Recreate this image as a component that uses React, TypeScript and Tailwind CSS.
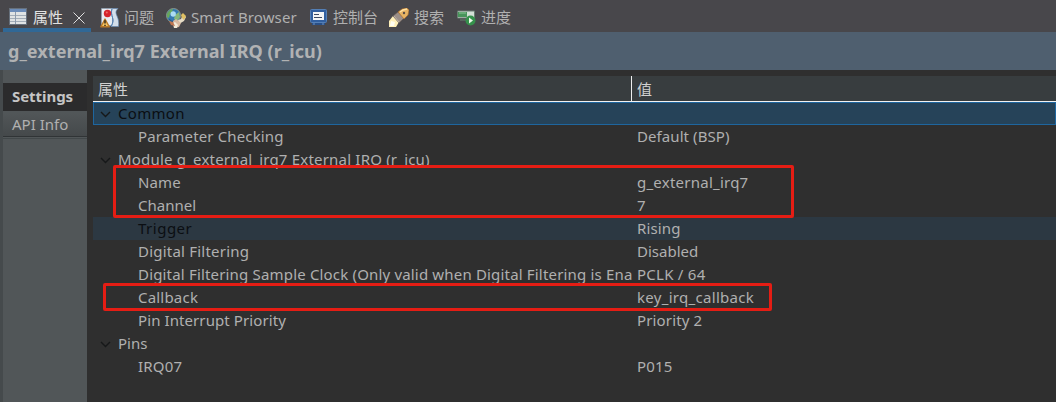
import type { ReactNode } from "react";

function TableIcon() {
  return (
    <svg className="h-[17px] w-[18px]" viewBox="0 0 18 17">
      <rect x="0" y="0" width="18" height="17" fill="#66707c" />
      <rect x="1" y="1" width="16" height="3" fill="#6c8cb8" />
      <rect x="1" y="4" width="16" height="12" fill="#e0e3e4" />
      <path d="M1 7.500h16M1 10.500h16M1 13.500h16" stroke="#a3adb8" strokeWidth="1" />
      <rect x="6" y="4" width="1" height="12" fill="#8d9bad" />
    </svg>
  );
}

function ProblemsIcon() {
  return (
    <svg className="h-5 w-[19px]" viewBox="0 0 19 20">
      <path d="M1.500.5h11v17h-11z" fill="#e9edf2" stroke="#91a4bb" strokeWidth=".6" />
      <path d="M12 .5h6c-2.500 2.500-2.500 4-1 7.500s2 6 1.500 10.500H11c2-4 2.500-6 1.500-9s-1.500-6-.5-9z" fill="#d3deea" stroke="#6688b0" strokeWidth=".7" />
      <path d="M12 1c-1 3-.5 5.500.5 8.500s.5 5-1 8.500" stroke="#4f7db2" strokeWidth="1" fill="none" />
      <circle cx="7.500" cy="5.500" r="3.700" fill="#d5252d" />
      <circle cx="6.800" cy="4.600" r="1" fill="#ef6b65" />
      <path d="M5 11 9.300 18.800H.8z" fill="#f6c765" stroke="#b97a28" strokeWidth="1.400" strokeLinejoin="round" />
      <path d="M5 12.300v3.200M5 16.700v1.300" stroke="#342716" strokeWidth="1.500" />
    </svg>
  );
}

function BrowserIcon() {
  return (
    <svg className="h-5 w-5" viewBox="0 0 20 20">
      <circle cx="7.500" cy="7.500" r="7" fill="#3578b0" stroke="#9aa58f" strokeWidth=".8" />
      <path d="M1 6c1-3 4-5 6-5l-1 3-2 2-1 4-2-1z" fill="#68a75b" />
      <path d="m9 7 4-3 1 5-3 4-3-2z" fill="#86b77b" />
      <circle cx="7.200" cy="6" r="2.700" fill="#acdcf2" />
      <path d="M3 11c2 3 5 3 7 2" stroke="#25598b" strokeWidth="1.200" fill="none" />
      <path d="m12 12 3-1 2-5 3 3-2 4-5 3z" fill="#e6dcc6" />
      <path d="m15 7 2-2 3 3-2 4-2-2z" fill="#dfc063" />
      <path d="m7 13 3-2 5 4-2 4-5 1z" fill="#d9b9a1" />
      <path d="m7 15 2-1 3 3-1 3H8z" fill="#f3ead8" />
      <path d="m3 13 4 1 2 4-4-1z" fill="#bd7550" />
    </svg>
  );
}

function ConsoleIcon() {
  return (
    <svg className="h-[17px] w-[17px]" viewBox="0 0 17 17">
      <rect x=".5" y=".5" width="16" height="13" rx="1" fill="#315f9f" stroke="#547fb5" />
      <rect x="3" y="3" width="11" height="8" fill="#f3f5f6" />
      <path d="M4 5.500h5M4 8.500h8" stroke="#3d4a62" />
      <path d="M2 14h13v2H2z" fill="#294f86" />
      <path d="M3 15h2M12 15h2" stroke="#6e91bd" />
    </svg>
  );
}

function SearchIcon() {
  return (
    <svg className="h-[19px] w-5" viewBox="0 0 20 19">
      <path d="M0 19v-6l4-5 6 6-3 5z" fill="#fff0b9" />
      <path d="m1 18 1-5 4 1-1 4z" fill="#fffdf1" />
      <path d="m4 8 5-4 6 6-5 5z" fill="#9b8f88" stroke="#665d58" strokeWidth=".6" />
      <path d="m5 8 5 6" stroke="#c0b4a9" strokeWidth="1" />
      <path d="m9 4 4-3 5-1 2 2-1 5-4 4z" fill="#e6b364" stroke="#a96c2c" strokeWidth=".7" />
      <path d="m11 4 3-2 4-1" stroke="#ffe2a2" strokeWidth="1.500" fill="none" />
      <circle cx="15" cy="5" r="1.200" fill="#554c48" />
    </svg>
  );
}

function ProgressIcon() {
  return (
    <svg className="h-4 w-[19px]" viewBox="0 0 19 16">
      <path d="M.5 1h17v7H.5z" fill="#d3e0d6" stroke="#687b70" />
      <path d="M1 2h9v5H1z" fill="#48945b" />
      <path d="M2 3h7" stroke="#8bc596" />
      <path d="M3 10h6" stroke="#668171" />
      <circle cx="13.500" cy="10.500" r="5" fill="#35914b" />
      <path d="m12 7.500 4 3-4 3z" fill="#edf7ec" />
    </svg>
  );
}

function Tab({ icon, label, className }: { icon: ReactNode; label: string; className: string }) {
  return (
    <div className={`flex h-full shrink-0 items-center whitespace-nowrap ${className}`}>
      <span className="flex w-[20px] shrink-0 justify-center pt-[3px]">{icon}</span>
      <span className="ml-[5px] pt-[2px]">{label}</span>
    </div>
  );
}

type RowData = { name: string; value?: string; group?: boolean; state?: "selected" | "hover"; tracking?: string; valueTracking?: string };

const rows: RowData[] = [
  { name: "Common", group: true, state: "selected", tracking: "tracking-[0.3px]" },
  { name: "Parameter Checking", value: "Default (BSP)", tracking: "tracking-[0.14px]", valueTracking: "tracking-[0.08px]" },
  { name: "Module g_external_irq7 External IRQ (r_icu)", group: true, tracking: "tracking-[0.2px]" },
  { name: "Name", value: "g_external_irq7", tracking: "tracking-[0.1px]", valueTracking: "tracking-[0.24px]" },
  { name: "Channel", value: "7" },
  { name: "Trigger", value: "Rising", state: "hover", tracking: "tracking-[0.5px]", valueTracking: "tracking-[0.15px]" },
  { name: "Digital Filtering", value: "Disabled", tracking: "tracking-[0.22px]" },
  { name: "Digital Filtering Sample Clock (Only valid when Digital Filtering is Ena", value: "PCLK / 64", tracking: "tracking-[0.175px]", valueTracking: "tracking-[0.25px]" },
  { name: "Callback", value: "key_irq_callback", tracking: "tracking-[0.2px]", valueTracking: "tracking-[0.3px]" },
  { name: "Pin Interrupt Priority", value: "Priority 2", tracking: "tracking-[0.09px]", valueTracking: "tracking-[0.15px]" },
  { name: "Pins", group: true },
  { name: "IRQ07", value: "P015", tracking: "tracking-[0.2px]", valueTracking: "tracking-[0.2px]" },
];

function PropertyRow({ row }: { row: RowData }) {
  const background =
    row.state === "selected"
      ? "border border-[#1e669f] bg-[#264359]"
      : row.state === "hover"
        ? "border border-[#2c3842] bg-[#2c3842]"
        : "border border-transparent";
  return (
    <div className={`flex h-[23px] shrink-0 items-center whitespace-nowrap ${background}`}>
      <div className={`flex w-[538px] shrink-0 items-center overflow-hidden ${row.group ? "pl-[6px]" : "pl-[44px]"}`}>
        {row.group && (
          <svg className="mr-[7px] h-[13px] w-[11px] shrink-0" viewBox="0 0 11 13" fill="none">
            <path d="m1 5 4.500 4.500L10 5" stroke="#161819" strokeWidth="1.400" />
          </svg>
        )}
        <span className={`pb-[2px] ${row.state ? "text-[#0b0e12]" : ""} ${row.tracking ?? ""}`}>{row.name}</span>
      </div>
      <span className={`pb-[2px] pl-[5px] ${row.valueTracking ?? ""}`}>{row.value}</span>
    </div>
  );
}

export default function App() {
  return (
    <div className="relative flex h-[402px] w-[1056px] flex-col overflow-hidden bg-[#2f2f2f] font-['Noto_Sans','Noto_Sans_CJK_SC',sans-serif] text-[15px] leading-[22px] text-[#b0b0b0]">
      <div className="flex h-8 shrink-0 bg-[#48474b]">
        <div className="flex h-full w-[91px] shrink-0 items-center text-[#e2e2e2]">
          <div className="ml-[3px] flex h-full w-[91px] items-center border-b-4 border-[#306896] pl-[6px] pt-[5px]">
            <span className="shrink-0"><TableIcon /></span>
            <span className="ml-[6px] whitespace-nowrap">属性</span>
            <svg className="ml-[10px] mt-[2px] h-3 w-3 shrink-0" viewBox="0 0 12 12">
              <path d="m.5.5 11 11m0-11-11 11" stroke="#dedede" strokeWidth="1" />
            </svg>
          </div>
        </div>
        <Tab className="ml-[8px] w-[67px]" icon={<ProblemsIcon />} label="问题" />
        <Tab className="w-[142px] tracking-[0.12px]" icon={<BrowserIcon />} label="Smart Browser" />
        <Tab className="w-[81px]" icon={<ConsoleIcon />} label="控制台" />
        <Tab className="w-[67px]" icon={<SearchIcon />} label="搜索" />
        <Tab className="w-[70px]" icon={<ProgressIcon />} label="进度" />
      </div>
      <div className="flex h-[38px] shrink-0 items-center bg-[#4f5f6f] pl-2 text-[18px] font-bold leading-[38px] tracking-[0.05px] text-[#b1b2b3]">
        <span className="whitespace-nowrap">g_external_irq7 External IRQ (r_icu)</span>
      </div>
      <div className="flex min-h-0 flex-1">
        <aside className="flex w-[87px] shrink-0 flex-col border-l-[3px] border-[#454a4c] bg-[#515658] pt-[13px]">
          <div className="flex h-[28px] items-center bg-[#2b2b2c] pb-[2px] pl-[9px] font-bold tracking-[-0.05px] text-[#c5c5c5]">Settings</div>
          <div className="mt-[2px] flex h-[24px] items-center border-b border-[#303436] bg-linear-to-b from-[#515658] to-[#45494b] pb-[2px] pl-[9px]">API Info</div>
          <div className="mt-px h-px bg-[#42484a]" />
        </aside>
        <main className="flex min-w-0 flex-1 flex-col pl-[6px] pt-[6px]">
          <div className="flex h-[26px] shrink-0 items-stretch border-b border-[#f2f2f2] bg-[#383d3f] text-[#d0d0d0]">
            <div className="flex w-[539px] items-center border-r border-[#eeeeee] pl-[5px] pt-px">属性</div>
            <div className="flex items-center pl-[5px] pt-px">值</div>
          </div>
          {rows.map((row) => <PropertyRow key={row.name} row={row} />)}
        </main>
      </div>
      <div className="absolute left-[113px] top-[165px] h-[53px] w-[681px] rounded-[2px] border-[3px] border-[#e51d14]" />
      <div className="absolute left-[103px] top-[283px] h-[28px] w-[669px] rounded-[2px] border-[3px] border-[#e51d14]" />
    </div>
  );
}
